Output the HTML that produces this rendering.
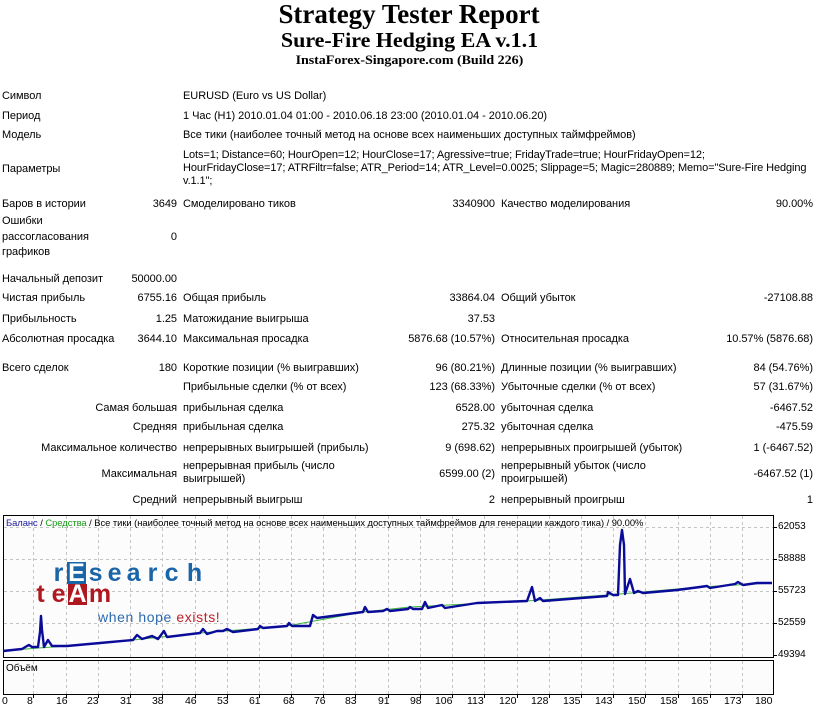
<!DOCTYPE html>
<html><head><meta charset="utf-8">
<style>
*{margin:0;padding:0}
body{width:818px;height:707px;background:#fff;position:relative;overflow:hidden;font-family:"Liberation Sans","DejaVu Sans",sans-serif;font-size:11px;color:#000;letter-spacing:-0.04px}
.t{position:absolute;white-space:nowrap;line-height:14px}
.r{text-align:right}
.h{position:absolute;left:0;width:818px;text-align:center;font-family:"Liberation Serif",serif;font-weight:bold;white-space:nowrap}
.L{position:absolute;width:19px;text-align:center;font-family:"Liberation Sans",sans-serif;font-weight:bold;font-size:25px;line-height:21px;height:21px}
</style></head><body>
<div class="h" style="top:-1px;font-size:27px;line-height:30px"><span style="display:inline-block;transform:scaleX(1.0)">Strategy Tester Report</span></div>
<div class="h" style="top:28px;font-size:21px;line-height:24px"><span style="display:inline-block;transform:scaleX(1.05)">Sure-Fire Hedging EA v.1.1</span></div>
<div class="h" style="top:52px;font-size:13px;line-height:16px"><span style="display:inline-block;transform:scaleX(1.08)">InstaForex-Singapore.com (Build 226)</span></div>

<div class="t" style="left:2px;top:89px">Символ</div>
<div class="t" style="left:183px;top:89px">EURUSD (Euro vs US Dollar)</div>
<div class="t" style="left:2px;top:109px">Период</div>
<div class="t" style="left:183px;top:109px">1 Час (H1) 2010.01.04 01:00 - 2010.06.18 23:00 (2010.01.04 - 2010.06.20)</div>
<div class="t" style="left:2px;top:128px">Модель</div>
<div class="t" style="left:183px;top:128px">Все тики (наиболее точный метод на основе всех наименьших доступных таймфреймов)</div>
<div class="t" style="left:2px;top:162px">Параметры</div>
<div class="t" style="left:183px;top:149px;line-height:13px;letter-spacing:-0.1px">Lots=1; Distance=60; HourOpen=12; HourClose=17; Agressive=true; FridayTrade=true; HourFridayOpen=12;<br>HourFridayClose=17; ATRFiltr=false; ATR_Period=14; ATR_Level=0.0025; Slippage=5; Magic=280889; Memo="Sure-Fire Hedging<br>v.1.1";</div>

<div class="t" style="left:2px;top:197px">Баров в истории</div>
<div class="t r" style="right:641px;top:197px">3649</div>
<div class="t" style="left:183px;top:197px">Смоделировано тиков</div>
<div class="t r" style="right:323px;top:197px">3340900</div>
<div class="t" style="left:501px;top:197px">Качество моделирования</div>
<div class="t r" style="right:5px;top:197px">90.00%</div>

<div class="t" style="left:2px;top:214px;line-height:15.5px">Ошибки<br>рассогласования<br>графиков</div>
<div class="t r" style="right:641px;top:230px">0</div>

<div class="t" style="left:2px;top:272px">Начальный депозит</div>
<div class="t r" style="right:641px;top:272px">50000.00</div>

<div class="t" style="left:2px;top:291px">Чистая прибыль</div>
<div class="t r" style="right:641px;top:291px">6755.16</div>
<div class="t" style="left:183px;top:291px">Общая прибыль</div>
<div class="t r" style="right:323px;top:291px">33864.04</div>
<div class="t" style="left:501px;top:291px">Общий убыток</div>
<div class="t r" style="right:5px;top:291px">-27108.88</div>

<div class="t" style="left:2px;top:312px">Прибыльность</div>
<div class="t r" style="right:641px;top:312px">1.25</div>
<div class="t" style="left:183px;top:312px">Матожидание выигрыша</div>
<div class="t r" style="right:323px;top:312px">37.53</div>

<div class="t" style="left:2px;top:332px">Абсолютная просадка</div>
<div class="t r" style="right:641px;top:332px">3644.10</div>
<div class="t" style="left:183px;top:332px">Максимальная просадка</div>
<div class="t r" style="right:323px;top:332px">5876.68 (10.57%)</div>
<div class="t" style="left:501px;top:332px">Относительная просадка</div>
<div class="t r" style="right:5px;top:332px">10.57% (5876.68)</div>

<div class="t" style="left:2px;top:361px">Всего сделок</div>
<div class="t r" style="right:641px;top:361px">180</div>
<div class="t" style="left:183px;top:361px">Короткие позиции (% выигравших)</div>
<div class="t r" style="right:323px;top:361px">96 (80.21%)</div>
<div class="t" style="left:501px;top:361px">Длинные позиции (% выигравших)</div>
<div class="t r" style="right:5px;top:361px">84 (54.76%)</div>

<div class="t" style="left:183px;top:380px">Прибыльные сделки (% от всех)</div>
<div class="t r" style="right:323px;top:380px">123 (68.33%)</div>
<div class="t" style="left:501px;top:380px">Убыточные сделки (% от всех)</div>
<div class="t r" style="right:5px;top:380px">57 (31.67%)</div>

<div class="t r" style="right:641px;top:401px">Самая большая</div>
<div class="t" style="left:183px;top:401px">прибыльная сделка</div>
<div class="t r" style="right:323px;top:401px">6528.00</div>
<div class="t" style="left:501px;top:401px">убыточная сделка</div>
<div class="t r" style="right:5px;top:401px">-6467.52</div>

<div class="t r" style="right:641px;top:420px">Средняя</div>
<div class="t" style="left:183px;top:420px">прибыльная сделка</div>
<div class="t r" style="right:323px;top:420px">275.32</div>
<div class="t" style="left:501px;top:420px">убыточная сделка</div>
<div class="t r" style="right:5px;top:420px">-475.59</div>

<div class="t r" style="right:641px;top:441px">Максимальное количество</div>
<div class="t" style="left:183px;top:441px">непрерывных выигрышей (прибыль)</div>
<div class="t r" style="right:323px;top:441px">9 (698.62)</div>
<div class="t" style="left:501px;top:441px">непрерывных проигрышей (убыток)</div>
<div class="t r" style="right:5px;top:441px">1 (-6467.52)</div>

<div class="t r" style="right:641px;top:467px">Максимальная</div>
<div class="t" style="left:183px;top:460px;line-height:13px">непрерывная прибыль (число<br>выигрышей)</div>
<div class="t r" style="right:323px;top:467px">6599.00 (2)</div>
<div class="t" style="left:501px;top:460px;line-height:13px">непрерывный убыток (число<br>проигрышей)</div>
<div class="t r" style="right:5px;top:467px">-6467.52 (1)</div>

<div class="t r" style="right:641px;top:493px">Средний</div>
<div class="t" style="left:183px;top:493px">непрерывный выигрыш</div>
<div class="t r" style="right:323px;top:493px">2</div>
<div class="t" style="left:501px;top:493px">непрерывный проигрыш</div>
<div class="t r" style="right:5px;top:493px">1</div>

<svg style="position:absolute;left:0;top:0" width="818" height="707">
<rect x="3.5" y="515.5" width="770" height="142" fill="#fcfcfc" stroke="#000"/>
<rect x="3.5" y="660.5" width="770" height="34" fill="#fcfcfc" stroke="#000"/>
<g stroke="#c4c4c4" stroke-dasharray="3,3" stroke-width="1">
<path d="M4 527.5H773M4 559.5H773M4 591.5H773M4 623.5H773"/>
<path d="M33.5 516V657M66.5 516V657M98.5 516V657M130.5 516V657M162.5 516V657M195.5 516V657M227.5 516V657M259.5 516V657M291.5 516V657M323.5 516V657M355.5 516V657M388.5 516V657M420.5 516V657M452.5 516V657M484.5 516V657M517.5 516V657M549.5 516V657M581.5 516V657M613.5 516V657M645.5 516V657M678.5 516V657M710.5 516V657M742.5 516V657"/>
<path d="M33.5 661V694M66.5 661V694M98.5 661V694M130.5 661V694M162.5 661V694M195.5 661V694M227.5 661V694M259.5 661V694M291.5 661V694M323.5 661V694M355.5 661V694M388.5 661V694M420.5 661V694M452.5 661V694M484.5 661V694M517.5 661V694M549.5 661V694M581.5 661V694M613.5 661V694M645.5 661V694M678.5 661V694M710.5 661V694M742.5 661V694"/>
</g>
<g stroke="#000"><path d="M774 527.5h3M774 559.5h3M774 591.5h3M774 623.5h3M774 655.5h3"/>
<path d="M33.5 695v3M66.5 695v3M98.5 695v3M130.5 695v3M162.5 695v3M195.5 695v3M227.5 695v3M259.5 695v3M291.5 695v3M323.5 695v3M355.5 695v3M388.5 695v3M420.5 695v3M452.5 695v3M484.5 695v3M517.5 695v3M549.5 695v3M581.5 695v3M613.5 695v3M645.5 695v3M678.5 695v3M710.5 695v3M742.5 695v3"/></g>
<polyline fill="none" stroke="#3ab53a" stroke-width="1" points="3,651 38,648 67,646 133,640 200,633 287,626 363,612 410,607 527,601 620,594 700,587 772,583"/>
<polyline fill="none" stroke="#0b0b9a" stroke-width="2.4" stroke-linejoin="round" points="3,651 22,649 27,646 29,645 32,647 38,647 40,632 41,616 42,630 44,647 48,640 52,646 67,646 100,643 133,640 137,635 142,639 152,636 158,639 164,631 167,637 200,633 203,629 207,634 217,631 223,631 227,629 233,632 258,629 260,626 263,628 287,626 289,623 292,626 310,626 313,615 317,618 340,615 363,612 365,607 368,612 383,611 387,609 390,611 408,609 410,607 413,609 422,609 425,602 428,608 442,605 445,608 477,603 527,601 532,587 535,601 540,598 543,601 607,596 608,592 613,595 618,595 620,545 622,530 624,545 625,594 628,585 630,579 634,593 638,591 643,593 677,590 700,587 707,586 710,588 735,584 738,582 743,585 757,583 772,583"/>
</svg>

<div class="t" style="left:6px;top:516px;font-size:9.4px;line-height:13px"><span style="color:#1a1aa0">Баланс</span> / <span style="color:#1a9a1a">Средства</span> / Все тики (наиболее точный метод на основе всех наименьших доступных таймфреймов для генерации каждого тика) / 90.00%</div>
<div class="t" style="left:6px;top:662px;font-size:10px;line-height:13px">Объём</div>
<div class="t" style="left:778px;top:520px;font-size:10px">62053</div>
<div class="t" style="left:778px;top:552px;font-size:10px">58888</div>
<div class="t" style="left:778px;top:584px;font-size:10px">55723</div>
<div class="t" style="left:778px;top:616px;font-size:10px">52559</div>
<div class="t" style="left:778px;top:648px;font-size:10px">49394</div>

<div style="position:absolute;left:0;top:694px;width:818px;height:14px;font-size:10.5px;line-height:14px">
<span class="t" style="left:2px">0</span>
<span class="t" style="left:27px">8</span><span class="t" style="left:56px">16</span><span class="t" style="left:87px">23</span><span class="t" style="left:120px">31</span><span class="t" style="left:152px">38</span><span class="t" style="left:185px">46</span><span class="t" style="left:217px">53</span><span class="t" style="left:249px">61</span><span class="t" style="left:283px">68</span><span class="t" style="left:314px">76</span><span class="t" style="left:345px">83</span><span class="t" style="left:378px">91</span><span class="t" style="left:410px">98</span><span class="t" style="left:435px">106</span><span class="t" style="left:467px">113</span><span class="t" style="left:499px">120</span><span class="t" style="left:531px">128</span><span class="t" style="left:563px">135</span><span class="t" style="left:595px">143</span><span class="t" style="left:628px">150</span><span class="t" style="left:660px">158</span><span class="t" style="left:691px">165</span><span class="t" style="left:724px">173</span><span class="t" style="left:755px">180</span>
</div>

<div style="position:absolute;left:67px;top:562px;width:19px;height:22px;background:#1a64a8"></div>
<div style="position:absolute;left:68px;top:584px;width:19px;height:21px;background:#b01820"></div>
<div class="L" style="left:49px;top:563px;color:#1a64a8">r</div>
<div class="L" style="left:67px;top:563px;color:#fff">E</div>
<div class="L" style="left:86px;top:563px;color:#1a64a8">s</div>
<div class="L" style="left:105px;top:563px;color:#1a64a8">e</div>
<div class="L" style="left:124px;top:563px;color:#1a64a8">a</div>
<div class="L" style="left:143px;top:563px;color:#1a64a8">r</div>
<div class="L" style="left:162px;top:563px;color:#1a64a8">c</div>
<div class="L" style="left:181px;top:563px;color:#1a64a8;width:27px">h</div>
<div class="L" style="left:31px;top:584px;color:#b01820">t</div>
<div class="L" style="left:49px;top:584px;color:#b01820">e</div>
<div class="L" style="left:68px;top:584px;color:#fff">A</div>
<div class="L" style="left:87px;top:584px;color:#b01820;width:26px">m</div>
<div class="t" style="left:98px;top:609px;font-size:14px;line-height:16px;letter-spacing:0.6px;color:#2a6ab0">when hope <span style="color:#c0202a">exists!</span></div>
</body></html>
